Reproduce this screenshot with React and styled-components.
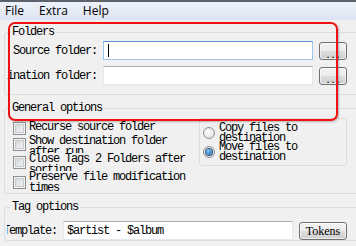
import styled, { createGlobalStyle } from 'styled-components';

const MONO = "'Liberation Mono', 'DejaVu Sans Mono', monospace";

const GlobalStyle = createGlobalStyle`
  html, body {
    margin: 0;
    padding: 0;
    background: #f0f0f0;
    overflow: hidden;
  }
`;

const Window = styled.div`
  position: relative;
  width: 356px;
  height: 246px;
  overflow: hidden;
  background: #f0f0f0;
  font-family: ${MONO};
  font-size: 12px;
  letter-spacing: -1.2px;
  color: #000;
`;

const MenuBar = styled.div`
  display: flex;
  gap: 15px;
  height: 18px;
  padding-left: 5px;
  border-top: 2px solid #59626d;
  background: linear-gradient(#eef1f8, #dce3f2);
  font-family: 'Open Sans', 'Liberation Sans', sans-serif;
  font-size: 12px;
  line-height: 18px;
  letter-spacing: 0;
`;

const MenuItem = styled.span`
  color: #000;
`;

const Content = styled.div`
  display: flex;
  flex-direction: column;
  padding-left: 4px;
`;

const GroupBox = styled.fieldset`
  margin: ${(p) => p.$top}px -30px 0 0;
  padding: 0;
  min-width: 0;
  border: 1px solid #d5dfe5;
  border-radius: 3px;
`;

const Legend = styled.legend`
  margin-left: 5px;
  padding: 0 2px;
  line-height: 12px;
`;

const FolderRows = styled.div`
  display: grid;
  gap: 6px;
  padding: 3px 0 9px;
`;

const FieldRow = styled.div`
  display: flex;
  align-items: center;
  gap: 6px;
  padding-top: ${(p) => p.$pt || 0}px;
`;

const FieldLabel = styled.div`
  display: flex;
  justify-content: flex-end;
  width: ${(p) => p.$w}px;
  margin-left: 2px;
  overflow: hidden;
  white-space: nowrap;
  line-height: 12px;
`;

const TextBox = styled.div`
  box-sizing: border-box;
  display: flex;
  align-items: center;
  width: ${(p) => p.$w}px;
  height: 19px;
  padding-left: 3px;
  background: #fff;
  border: 1px solid ${(p) => (p.$focused ? '#9cc5ee' : '#e3e9ef')};
  border-top-color: ${(p) => (p.$focused ? '#5c93cf' : '#abadb3')};
  white-space: nowrap;
`;

const Caret = styled.span`
  width: 1px;
  height: 13px;
  margin-left: 1px;
  background: #000;
`;

const PushButton = styled.button`
  box-sizing: border-box;
  width: ${(p) => p.$w}px;
  height: 18px;
  padding: 0;
  border: 1px solid #707070;
  border-radius: 3px;
  background: linear-gradient(#f2f2f2 0%, #ebebeb 50%, #dddddd 51%, #cfcfcf 100%);
  box-shadow: inset 0 0 0 1px rgba(255, 255, 255, 0.6);
  font-family: 'Liberation Serif', serif;
  font-size: 12px;
  line-height: 16px;
  letter-spacing: ${(p) => (p.$dots ? '2px' : '0')};
  color: #000;
`;

const Dots = styled.span`
  position: relative;
  top: 3px;
  left: 1px;
`;

const OptionsLayout = styled.div`
  display: flex;
  align-items: flex-start;
  padding: 4px 0 0 8px;
`;

const CheckList = styled.div`
  display: flex;
  flex-direction: column;
  margin-top: 3px;
`;

const CheckItem = styled.div`
  display: flex;
  align-items: center;
  gap: 3px;
  height: ${(p) => p.$h}px;
`;

const CheckBox = styled.span`
  box-sizing: border-box;
  flex: none;
  width: 13px;
  height: 13px;
  border: 1px solid #8e8f8f;
  background: linear-gradient(135deg, #cfd2d6, #f7f7f7);
  box-shadow: inset 0 0 0 1px #f4f4f4, inset 0 0 0 2px #c6c9cd;
`;

const CheckText = styled.div`
  align-self: flex-start;
  width: 160px;
  height: 100%;
  padding-top: 1px;
  box-sizing: border-box;
  overflow: hidden;
  line-height: 10.5px;
`;

const RadioBox = styled.div`
  display: flex;
  flex-direction: column;
  width: 148px;
  box-sizing: border-box;
  margin-left: 10px;
  padding: 4px 0 4px 3px;
  border: 1px solid #dcdcdc;
  border-radius: 3px;
`;

const RadioItem = styled.div`
  display: flex;
  align-items: center;
  gap: 4px;
  height: 19px;
`;

const Radio = styled.span`
  box-sizing: border-box;
  flex: none;
  display: flex;
  align-items: center;
  justify-content: center;
  width: 12px;
  height: 12px;
  border: 1px solid #8e8f8f;
  border-radius: 50%;
  background: radial-gradient(circle at 40% 40%, #ffffff, #d6d8db);
  margin-top: 1px;
`;

const RadioDot = styled.span`
  width: 6px;
  height: 6px;
  border-radius: 50%;
  background: radial-gradient(circle at 40% 35%, #7cc6f7, #1c5f9f);
  box-shadow: 0 0 0 1px #2a5b8a;
`;

const RadioText = styled.div`
  align-self: flex-start;
  line-height: 10px;
  width: 127px;
`;

const Annotation = styled.div`
  position: absolute;
  left: 8px;
  top: 22px;
  width: 330px;
  height: 99px;
  box-sizing: border-box;
  border: 2px solid #f01212;
  border-radius: 7px;
  box-shadow: 1px 1px 2px rgba(0, 0, 0, 0.25);
  pointer-events: none;
`;

const checks = [
  { text: 'Recurse source folder', h: 14 },
  { text: 'Show destination folder after run', h: 18 },
  { text: 'Close Tags 2 Folders after sorting', h: 18 },
  { text: 'Preserve file modification times', h: 22 },
];

const radios = [
  { text: 'Copy files to destination', on: false },
  { text: 'Move files to destination', on: true },
];

export default function App() {
  return (
    <Window>
      <GlobalStyle />
      <MenuBar>
        <MenuItem>File</MenuItem>
        <MenuItem>Extra</MenuItem>
        <MenuItem>Help</MenuItem>
      </MenuBar>
      <Content>
        <GroupBox $top={6}>
          <Legend>Folders</Legend>
          <FolderRows>
            <FieldRow>
              <FieldLabel $w={90}>Source folder:</FieldLabel>
              <TextBox $w={210} $focused>
                <Caret />
              </TextBox>
              <PushButton $w={28} $dots>
                <Dots>...</Dots>
              </PushButton>
            </FieldRow>
            <FieldRow>
              <FieldLabel $w={90}>Destination folder:</FieldLabel>
              <TextBox $w={210} />
              <PushButton $w={28} $dots>
                <Dots>...</Dots>
              </PushButton>
            </FieldRow>
          </FolderRows>
        </GroupBox>

        <GroupBox $top={7}>
          <Legend>General options</Legend>
          <OptionsLayout>
            <CheckList>
              {checks.map((c) => (
                <CheckItem key={c.text} $h={c.h}>
                  <CheckBox />
                  <CheckText>{c.text}</CheckText>
                </CheckItem>
              ))}
            </CheckList>
            <RadioBox>
              {radios.map((r) => (
                <RadioItem key={r.text}>
                  <Radio>{r.on && <RadioDot />}</Radio>
                  <RadioText>{r.text}</RadioText>
                </RadioItem>
              ))}
            </RadioBox>
          </OptionsLayout>
        </GroupBox>

        <GroupBox $top={7}>
          <Legend>Tag options</Legend>
          <FieldRow $pt={8}>
            <FieldLabel $w={50}>Template:</FieldLabel>
            <TextBox $w={230}>$artist - $album</TextBox>
            <PushButton $w={48}>Tokens</PushButton>
          </FieldRow>
        </GroupBox>
      </Content>
      <Annotation />
    </Window>
  );
}
